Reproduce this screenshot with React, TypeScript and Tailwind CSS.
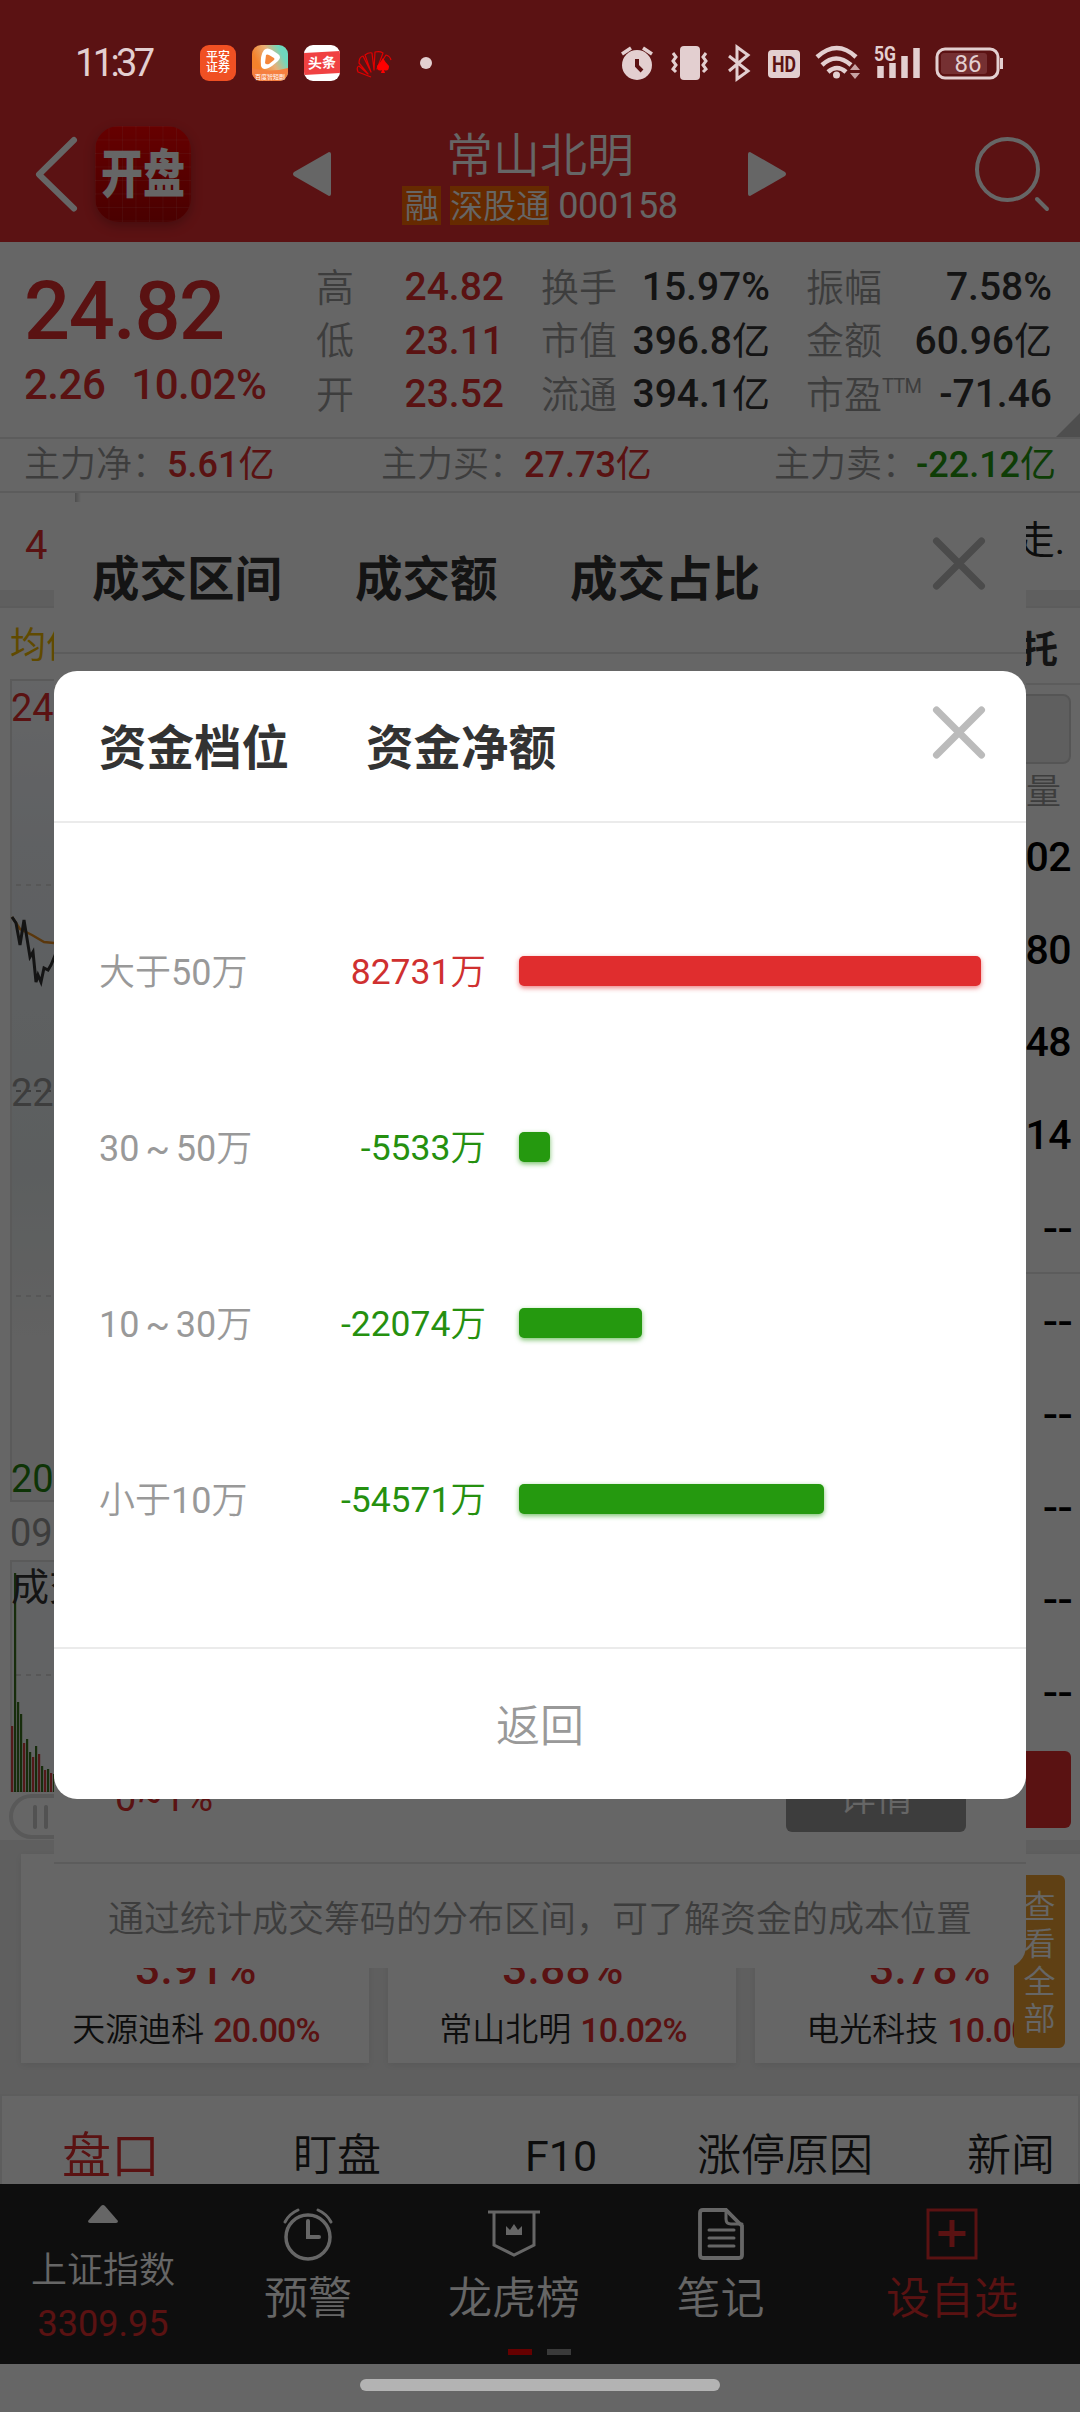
import type { ReactNode } from "react";

const fundLevels = [
  { prefix: "大于", range: "50", value: 82731 },
  { prefix: "", range: "30 ~ 50", value: -5533 },
  { prefix: "", range: "10 ~ 30", value: -22074 },
  { prefix: "小于", range: "10", value: -54571 },
];

const maxFund = 82731;

const volumeBars = [
  { x: 11, top: 166, up: true },
  { x: 14, top: 13, up: false },
  { x: 17, top: 142, up: false },
  { x: 20, top: 154, up: false },
  { x: 23, top: 183, up: true },
  { x: 26, top: 179, up: false },
  { x: 29, top: 192, up: false },
  { x: 32, top: 197, up: true },
  { x: 35, top: 186, up: false },
  { x: 38, top: 194, up: true },
  { x: 41, top: 206, up: false },
  { x: 44, top: 210, up: true },
  { x: 47, top: 209, up: false },
  { x: 50, top: 213, up: true },
  { x: 53, top: 214, up: false },
];

const orderVolumes = ["02", "80", "48", "14", "--", "--", "--", "--", "--", "--"];

const sectors = [
  { pct: "3.91%", name: "天源迪科", change: "20.00%" },
  { pct: "3.88%", name: "常山北明", change: "10.02%" },
  { pct: "3.78%", name: "电光科技", change: "10.00%" },
];

function StatusBar() {
  return (
    <div className="absolute inset-x-0 top-0 z-30 flex h-[98px] items-center pt-[27px] text-[#e3cfd0]">
      <div className="ml-[75px] w-[125px] text-[38px] leading-none tracking-[-3.6px]">11:37</div>
      <div className="flex gap-4">
        <div className="grid h-9 w-9 place-content-center rounded-[9px] bg-[#f05023] text-center text-[12px] font-medium leading-[11px] text-white">
          平安
          <br />
          证券
        </div>
        <svg width="36" height="36" viewBox="0 0 36 36">
          <defs>
            <linearGradient id="play" x1="0" y1="0.7" x2="1" y2="0.2">
              <stop offset="0.2" stopColor="#f5822c" />
              <stop offset="0.55" stopColor="#e8b078" />
              <stop offset="0.85" stopColor="#6fd8bd" />
            </linearGradient>
          </defs>
          <rect width="36" height="36" rx="9" fill="url(#play)" />
          <path d="M0 23q18 5 36 0v4a9 9 0 0 1-9 9H9a9 9 0 0 1-9-9z" fill="#f58040" />
          <path d="M12 5q3-3 8 0l6 4q4 3 0 7l-6 5q-9 6-11 0-1-11 3-16z" fill="#fff" />
          <path d="M14 10q1-1 3 0l5 3q1 1 0 2l-5 4q-3 1-4-1z" fill="#f5863a" />
          <text x="18" y="34" textAnchor="middle" fontSize="6" fill="#fff">百度智短剧</text>
        </svg>
        <div className="flex h-9 w-9 items-center overflow-hidden rounded-[9px] bg-white">
          <div className="w-9 -skew-y-3 bg-[#f04142] py-[4px] text-center text-[14px] font-bold leading-[14px] text-white">头条</div>
        </div>
        {/* fan of cards with a spade */}
        <svg width="36" height="36" viewBox="0 0 36 36" fill="none" stroke="#e00000" strokeWidth="1.200" strokeLinejoin="round">
          <path d="M15 32L2 27q-2-5 1-6l9 8-9-11q0-6 4-7l8 16-6-17q4-3 7-2l2 17 1-18q5-1 8 1l-6 16 9-14q4 1 5 5" />
          <path d="M27 13q-2 4-6 8 0 6 5 4l-1 3h4l-1-3q5 2 5-4-4-4-6-8z" fill="#f00" stroke="none" />
        </svg>
      </div>
      <div className="ml-[28px] h-3 w-3 rounded-full bg-[#e3cfd0]" />
      <svg className="ml-[188px]" width="390" height="40" viewBox="620 42 390 40" fill="none" stroke="#e3cfd0" strokeWidth="3">
        <circle cx="637" cy="64" r="15" fill="#e3cfd0" stroke="none" />
        <path d="M637 58v7l5 5" stroke="#5b1213" strokeWidth="4" />
        <path d="M622 53l9-6M652 53l-9-6" strokeWidth="3.5" />
        <rect x="680" y="45" width="20" height="34" rx="4" fill="#e3cfd0" stroke="none" />
        <path d="M673 52l3 4-3 4 3 4-3 4 3 3M706 52l-3 4 3 4-3 4 3 4-3 3" />
        <path d="M729 55l19 15-11 8V46l11 8-19 16" />
        <rect x="768" y="49" width="32" height="28" rx="4" fill="#e3cfd0" stroke="none" />
        <text x="784" y="71" textAnchor="middle" fontSize="22" fontWeight="700" fill="#5b1213" stroke="none" textLength="24" lengthAdjust="spacingAndGlyphs">HD</text>
        <path d="M817 56q20-18 39 0M822 64q14-13 29 0M828 71q9-8 18 0" strokeWidth="4.5" />
        <circle cx="836.500" cy="74" r="3.500" fill="#e3cfd0" stroke="none" />
        <path d="M850 69l5-6 5 6zM850 72l5 6 5-6z" fill="#c7a2a3" stroke="none" />
        <text x="874" y="60" fontSize="20" fontWeight="700" fill="#e3cfd0" stroke="none" textLength="22" lengthAdjust="spacingAndGlyphs">5G</text>
        <path d="M880.500 65v12M892.500 62v15M904.500 55v22M916.500 47v30" strokeWidth="6.500" />
        <rect x="937" y="48" width="61" height="29" rx="8" />
        <rect x="941" y="52" width="46" height="21" rx="3" fill="#753032" stroke="none" />
        <path d="M1001.500 57v11" />
        <text x="968" y="71" textAnchor="middle" fontSize="24" fill="#e3cfd0" stroke="none">86</text>
      </svg>
    </div>
  );
}

function Header() {
  return (
    <header className="flex h-[242px] pt-[117px] text-white">
      <svg className="ml-[34px] mt-[16px]" width="48" height="84" viewBox="0 0 48 84" fill="none" stroke="#fff" strokeWidth="6" strokeLinecap="round" strokeLinejoin="round">
        <path d="M40 7L5 41.500l35 34" />
      </svg>
      <div className="ml-[13px] mt-[9px] flex h-24 w-24 items-center justify-center rounded-[24px] bg-linear-to-b from-[#ff0000] to-[#b80000] shadow-[0_4px_12px_rgba(0,0,0,0.25)]">
        <div className="flex h-full w-full items-center justify-center rounded-[24px] bg-[linear-gradient(to_right,rgba(255,255,255,0.1)_1px,transparent_1px),linear-gradient(rgba(255,255,255,0.1)_1px,transparent_1px)] bg-size-[13.5px_13.5px] text-[42px] font-black leading-none">
          <span className="scale-y-125 pt-[2px]">开盘</span>
        </div>
      </div>
      <svg className="ml-[101px] mt-[34px]" width="40" height="46" viewBox="0 0 40 46" fill="#fff">
        <path d="M37 1q2 0 2 2v40q0 2-2 2L2 25q-2-2 0-4z" />
      </svg>
      <div className="ml-[70px] flex w-[276px] flex-col items-center">
        <div className="mt-[14px] text-[47px] font-[350] leading-[50px]">常山北明</div>
        <div className="mt-[4px] flex items-center pt-[1px]">
          <span className="flex h-[39px] w-[39px] items-center justify-center bg-[#ff6a00] pt-[1px] text-[34px] font-[350] leading-none">融</span>
          <span className="ml-[9px] flex h-[39px] w-[99px] items-center justify-center bg-[#ff6a00] pt-[1px] text-[33px] font-[350] leading-none">深股通</span>
          <span className="ml-[9px] pt-[1px] text-[36px] leading-none tracking-[-0.3px]">000158</span>
        </div>
      </div>
      <svg className="ml-[69px] mt-[34px]" width="40" height="46" viewBox="0 0 40 46" fill="#fff">
        <path d="M3 1q-2 0-2 2v40q0 2 2 2l35-20q2-2 0-4z" />
      </svg>
      <svg className="ml-[187px] mt-[18px]" width="80" height="80" viewBox="0 0 80 80" fill="none" stroke="#fff" strokeWidth="4" strokeLinecap="round">
        <circle cx="33.500" cy="34.500" r="30.500" />
        <path d="M63 64l10 10" />
      </svg>
    </header>
  );
}

function Stat({ label, value, unit, className }: { label: ReactNode; value: string; unit?: string; className?: string }) {
  return (
    <div className={`flex h-[53.5px] items-center justify-between text-[38px] leading-none ${className ?? "text-[#333]"}`}>
      <span className="font-[350] text-[#999]">{label}</span>
      <span className="text-[39px] font-medium">
        {value}
        {unit && <span className="text-[38px] font-normal">{unit}</span>}
      </span>
    </div>
  );
}

function Quote() {
  return (
    <section className="relative flex h-[197px] border-b-2 border-[#e6e6e6] bg-white">
      <div className="ml-[24px] w-[292px] text-[#e02d2e]">
        <div className="mt-[29px] text-[81px] font-medium leading-[82px] tracking-[-1.4px]">24.82</div>
        <div className="mt-[8px] flex gap-[26px] text-[42px] font-medium leading-[48px] tracking-[-0.5px]">
          <span>2.26</span>
          <span>10.02%</span>
        </div>
      </div>
      <div className="mt-[19px] w-[188px]">
        <Stat label="高" value="24.82" className="text-[#e02d2e]" />
        <Stat label="低" value="23.11" className="text-[#e02d2e]" />
        <Stat label="开" value="23.52" className="text-[#e02d2e]" />
      </div>
      <div className="ml-[37px] mt-[19px] w-[229px]">
        <Stat label="换手" value="15.97%" />
        <Stat label="市值" value="396.8" unit="亿" />
        <Stat label="流通" value="394.1" unit="亿" />
      </div>
      <div className="ml-[36px] mt-[19px] w-[246px]">
        <Stat label="振幅" value="7.58%" />
        <Stat label="金额" value="60.96" unit="亿" />
        <Stat
          label={
            <span className="flex">
              市盈<span className="text-[20px] font-normal leading-none tracking-[-0.8px]">TTM</span>
            </span>
          }
          value="-71.46"
        />
      </div>
      <div className="absolute bottom-0 right-0 h-6 w-6 bg-[#c4c4c4] [clip-path:polygon(100%_0,100%_100%,0_100%)]" />
    </section>
  );
}

function MainFlow() {
  return (
    <section className="flex h-[54px] items-center whitespace-nowrap border-b-2 border-[#e6e6e6] bg-white pb-[1px] pl-[24px] text-[36px] leading-none text-[#e02d2e]">
      <div className="flex w-[357px]">
        <span className="w-[143px] font-[350] text-[#999]">主力净：</span>
        <span className="font-medium">
          5.61<span className="font-normal">亿</span>
        </span>
      </div>
      <div className="flex w-[393px]">
        <span className="w-[143px] font-[350] text-[#999]">主力买：</span>
        <span className="font-medium">
          27.73<span className="font-normal">亿</span>
        </span>
      </div>
      <div className="flex">
        <span className="w-[142px] font-[350] text-[#999]">主力卖：</span>
        <span className="font-medium text-[#25990f]">
          -22.12<span className="font-normal">亿</span>
        </span>
      </div>
    </section>
  );
}

function TimeChart() {
  return (
    <div className="w-[700px] pl-[10px]">
      <div className="flex h-[71px] items-center pt-[5px] text-[36px] leading-none text-[#f0b800]">均价</div>
      <svg className="-ml-[10px] block" width="700" height="823" viewBox="0 0 700 823">
        <defs>
          <linearGradient id="area" x1="0" y1="0" x2="0" y2="1">
            <stop offset="0" stopColor="#fbfcff" />
            <stop offset="0.2" stopColor="#eef2f7" />
            <stop offset="0.6" stopColor="#e6eced" />
            <stop offset="0.8" stopColor="#f4f4f4" />
          </linearGradient>
        </defs>
        <rect x="11" y="1" width="680" height="821" fill="url(#area)" stroke="#e0e0e0" strokeWidth="2" />
        <path d="M16 206h670M16 617h670" stroke="#dadada" strokeWidth="2" strokeDasharray="5 5" />
        <path d="M16 412h670" stroke="#999" strokeWidth="2" strokeDasharray="5 5" />
        <path d="M12 238l8 12 12 6 12 7 10 1" fill="none" stroke="#e08a20" strokeWidth="2.500" />
        <path d="M12 238l4 6 4 22 4-25 6 37 3-5 3 30 2-7 3 7 3-14 4 2 3-5 5-12" fill="none" stroke="#333" strokeWidth="3" />
        <g fontSize="38">
          <text x="11" y="42" fill="#e02d2e">24.82</text>
          <text x="11" y="427" fill="#999">22.56</text>
          <text x="11" y="813" fill="#25820f">20.30</text>
        </g>
      </svg>
      <div className="flex h-[58px] items-center pt-[3px] text-[38px] leading-none text-[#999]">09:30</div>
      <svg className="-ml-[10px] block" width="700" height="232" viewBox="0 0 700 232">
        <rect x="11" y="1" width="680" height="231" fill="#f6f8fb" stroke="#e0e0e0" strokeWidth="2" />
        <path d="M16 115h670" stroke="#dadada" strokeWidth="2" strokeDasharray="5 5" />
        {volumeBars.map((bar) => (
          <rect key={bar.x} x={bar.x} y={bar.top} width="2.200" height={232 - bar.top} fill={bar.up ? "#d04040" : "#3a7020"} />
        ))}
        <text x="11" y="40" fontSize="38" fill="#333">成交量</text>
      </svg>
      <div className="-ml-[1px] mt-[2px] flex h-[45px] w-[600px] items-center gap-[7px] rounded-full border-4 border-[#dedede] pl-[20px]">
        <div className="h-6 w-[4px] rounded bg-[#ccc]" />
        <div className="h-6 w-[4px] rounded bg-[#ccc]" />
      </div>
    </div>
  );
}

function OrderBook() {
  return (
    <div className="flex flex-1 flex-col items-end">
      <div className="flex h-[77px] w-full items-center justify-end border-b-2 border-[#e6e6e6] pr-[22px] pt-[9px] text-[37px] font-bold leading-none text-[#333]">委托</div>
      <div className="mr-[9px] mt-[9px] h-[70px] w-[300px] rounded-lg border-2 border-[#d4d4d4] bg-[#ededed]" />
      <div className="mr-[19px] mt-[11px] text-[35px] font-[350] leading-[36px] text-[#999]">量</div>
      {orderVolumes.map((volume, i) => (
        <div
          key={i}
          className={`flex w-full items-center justify-end pr-[9px] text-[41px] font-medium leading-none tracking-[-0.5px] text-black ${
            i === 4 ? "h-[92.7px] border-b-2 border-[#e6e6e6]" : "h-[92.7px]"
          }`}
        >
          <span className={volume === "--" ? "scale-x-110 pt-[4px]" : ""}>{volume}</span>
        </div>
      ))}
      <div className="mr-[9px] mt-[13px] h-[77px] w-[300px] rounded-md bg-[#e02d2e]" />
    </div>
  );
}

function SectorCards() {
  return (
    <section className="relative flex h-[254px] gap-[19px] overflow-hidden bg-[#eee] pl-[21px] pt-[14px]">
      {sectors.map((sector) => (
        <div key={sector.name} className="h-[209px] w-[348px] shrink-0 bg-white pt-[93px] text-center shadow-[0_2px_8px_rgba(0,0,0,0.08)]">
          <div className="pl-[2px] text-[44px] font-medium leading-[44px] tracking-[0.4px] text-[#e02d2e]">{sector.pct}</div>
          <div className="mt-[19px] flex items-center justify-center gap-[9px] pl-[2px] text-[33px] leading-[40px]">
            <span className="font-[350] text-[#222]">{sector.name}</span>
            <span className="text-[34px] font-medium tracking-[-0.9px] text-[#e02d2e]">{sector.change}</span>
          </div>
        </div>
      ))}
      <div className="absolute left-[1014px] top-[35px] flex h-[173px] w-[51px] flex-col items-center justify-center rounded-md bg-[#eea032] pt-[4px] text-[32px] font-[350] leading-[37.500px] text-white">
        <span>查</span>
        <span>看</span>
        <span>全</span>
        <span>部</span>
      </div>
    </section>
  );
}

function Tabs() {
  return (
    <section className="flex h-[90px] items-center border-2 border-b-0 border-[#e8e8e8] bg-white pt-[32px] text-[44px] leading-none text-[#222]">
      <span className="ml-[60px] w-[231px] text-[49px] font-[350] text-[#e02d2e]">盘口</span>
      <span className="w-[232px] font-[350]">盯盘</span>
      <span className="w-[172px] text-[43px]">F10</span>
      <span className="w-[270px] font-[350]">涨停原因</span>
      <span className="whitespace-nowrap font-[350]">新闻</span>
    </section>
  );
}

function NavItem({ label, icon, className }: { label: string; icon: ReactNode; className: string }) {
  return (
    <div className={`flex flex-col items-center pt-[22px] ${className}`}>
      <svg width="56" height="56" viewBox="0 0 56 56" fill="none" stroke="currentColor" strokeWidth="3">
        {icon}
      </svg>
      <span className="mt-[14px] text-[44px] font-[350] leading-[46px]">{label}</span>
    </div>
  );
}

function BottomNav() {
  return (
    <nav className="relative flex h-[180px] bg-[#232323] text-white">
      <div className="flex w-[206px] flex-col items-center">
        <svg className="mt-[20px]" width="32" height="20" viewBox="0 0 32 20" fill="#fff">
          <path d="M14 2q2-2 4 0l13 15q0 2-2 2H3q-2 0-2-2z" />
        </svg>
        <span className="mt-[27px] text-[36px] font-[350] leading-[40px]">上证指数</span>
        <span className="mt-[13px] text-[36px] leading-[40px] text-[#e02d2e]">3309.95</span>
      </div>
      <NavItem
        label="预警"
        className="w-[204px]"
        icon={
          <>
            <circle cx="28" cy="31" r="22" strokeWidth="3.500" />
            <path d="M28 15v16h11" strokeWidth="4" strokeLinecap="round" />
            <path d="M5 16q4-8 13-12M51 16q-4-8-13-12" strokeLinecap="round" />
          </>
        }
      />
      <NavItem
        label="龙虎榜"
        className="w-[208px]"
        icon={
          <>
            <path d="M2 6h52M8 6v33l20 10 20-10V6" />
            <path d="M20 20l4 4 4-6 4 6 4-4v9H20z" fill="currentColor" stroke="none" />
          </>
        }
      />
      <NavItem
        label="笔记"
        className="w-[205px]"
        icon={
          <>
            <path d="M10 4h23l16 16v29q0 3-3 3H10q-3 0-3-3V7q0-3 3-3z" strokeWidth="3.800" />
            <path d="M33 4v9q0 5 5 5h11M16 24h25M16 32h25M16 40h25" strokeLinecap="round" />
          </>
        }
      />
      <NavItem
        label="设自选"
        className="ml-[26px] w-[206px] text-[#e02d2e]"
        icon={
          <>
            <rect x="4" y="4" width="48" height="48" />
            <path d="M28 14v27M14.500 27.500h27" strokeWidth="5" />
          </>
        }
      />
      <div className="absolute bottom-[9px] left-[508px] flex gap-[15px]">
        <div className="h-[6px] w-6 bg-[#ff0000]" />
        <div className="h-[6px] w-6 bg-[#919191]" />
      </div>
    </nav>
  );
}

function CloseIcon() {
  return (
    <svg width="56" height="56" viewBox="0 0 56 56" stroke="#bbb" strokeWidth="7" strokeLinecap="round">
      <path d="M5.500 6l45 45M50.500 6l-45 45" />
    </svg>
  );
}

// Price range dialog, sits under the fund level dialog
function RangeDialog() {
  return (
    <div className="flex h-[1466px] w-[972px] flex-col rounded-[22px] bg-white">
      <div className="flex h-[152px] items-start border-b-2 border-[#e6e6e6] pl-[38px] pt-[53px] text-[47.500px] font-bold leading-[50px] text-[#333]">
        <span className="w-[263px]">成交区间</span>
        <span className="w-[215px]">成交额</span>
        <span className="w-[361px]">成交占比</span>
        <div className="-mt-[20px]">
          <CloseIcon />
        </div>
      </div>
      <div className="flex flex-1 items-end justify-between pb-[30px] pl-[61px] pr-[60px]">
        <span className="mb-[12px] text-[38px] leading-[44px] tracking-[0.6px] text-[#e02d2e]">0~1%</span>
        <div className="flex h-[70px] w-[180px] items-center justify-center rounded-md bg-[#999] pt-[2px] text-[37px] font-[350] leading-none text-white">详情</div>
      </div>
      <div className="flex h-[106px] items-center justify-center border-t-2 border-[#e6e6e6] pt-[7px] text-[36px] font-[350] leading-none text-[#999]">
        通过统计成交筹码的分布区间，可了解资金的成本位置
      </div>
    </div>
  );
}

function FundDialog() {
  return (
    <div className="flex h-[1128px] w-[972px] flex-col rounded-[23px] bg-white">
      <div className="flex h-[152px] items-start border-b-2 border-[#ebebeb] pl-[45px] pt-[53px] text-[47.500px] font-bold leading-[50px] text-[#333]">
        <span className="w-[267px]">资金档位</span>
        <span className="w-[565px]">资金净额</span>
        <div className="-mt-[20px]">
          <CloseIcon />
        </div>
      </div>
      <div className="flex-1 pt-[60px]">
        {fundLevels.map((level) => (
          <div key={level.range} className="flex h-[176px] items-center pl-[45px] text-[36px] leading-none">
            <span className="w-[180px] pt-[3px] text-[#999] [word-spacing:-3px]">
              <span className="font-[350]">{level.prefix}</span>
              {level.range}
              <span className="font-[350]">万</span>
            </span>
            <span className={`w-[207px] pt-[3px] text-right text-[35.500px] ${level.value > 0 ? "text-[#cf3030]" : "text-[#25900f]"}`}>
              {level.value}
              <span className="font-[350]">万</span>
            </span>
            <div
              className={`ml-[33px] h-[30px] rounded-[5px] ${
                level.value > 0 ? "bg-[#e02d2e] shadow-[0_2px_5px_rgba(224,45,46,0.6)]" : "bg-[#25990f] shadow-[0_2px_5px_rgba(37,153,15,0.6)]"
              }`}
              style={{ width: (Math.abs(level.value) / maxFund) * 462 }}
            />
          </div>
        ))}
      </div>
      <div className="flex h-[152px] items-center justify-center border-t-2 border-[#ebebeb] pt-[5px] text-[44px] font-[350] leading-none text-[#999]">返回</div>
    </div>
  );
}

export default function App() {
  return (
    <div className="relative flex h-[2412px] w-[1080px] flex-col overflow-hidden bg-white font-['Roboto','Noto_Sans_CJK_SC',sans-serif]">
      <StatusBar />
      <div className="bg-[#e42d30]">
        <Header />
      </div>
      <Quote />
      <MainFlow />
      <section className="relative flex h-[97px] justify-between bg-white pl-[25px] pr-[15px] pt-[29px] text-[40px] leading-[44px] text-[#e02d2e]">
        <span className="mt-[2px]">4</span>
        <span className="-mt-[3px] text-[39px] text-[#222]">走.</span>
        <div className="absolute left-[75px] top-0 h-[9px] w-[6px] bg-linear-to-r from-[#c4c4c4] to-white" />
      </section>
      <div className="h-[18px] border-b-2 border-[#e6e6e6] bg-[#eee]" />
      <section className="flex h-[1232px] bg-white">
        <TimeChart />
        <OrderBook />
      </section>
      <SectorCards />
      <Tabs />
      <BottomNav />

      <div className="absolute inset-0 flex items-center justify-center pt-[58px]">
        <RangeDialog />
      </div>
      <div className="absolute inset-0 flex items-center justify-center bg-black/60 pt-[58px]">
        <FundDialog />
      </div>
      <div className="absolute bottom-[21px] left-[360px] z-30 h-3 w-[360px] rounded-full bg-[#b3b3b3]" />
    </div>
  );
}
